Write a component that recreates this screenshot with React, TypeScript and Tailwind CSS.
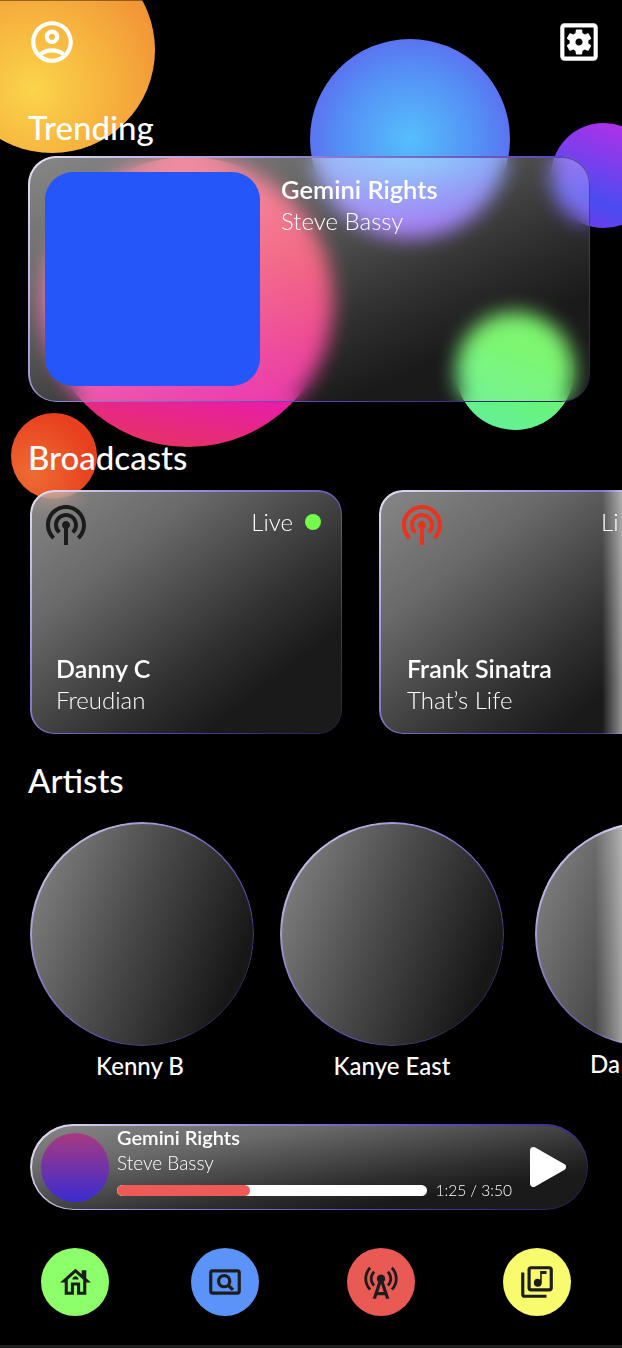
import { ReactNode } from 'react';
import {
  MdOutlineAccountCircle,
  MdOutlineSettingsApplications,
  MdPodcasts,
  MdOutlineHouse,
  MdOutlinePageview,
  MdCellTower,
  MdOutlineLibraryMusic,
} from 'react-icons/md';

const font = "font-['Lato','Noto_Sans',sans-serif]";
const glass =
  'backdrop-blur-[10px] bg-[linear-gradient(to_bottom_right,rgba(255,255,255,0.53)_0%,rgba(255,255,255,0.41)_28%,rgba(255,255,255,0.19)_62%,rgba(255,255,255,0.1)_78%,rgba(255,255,255,0.1)_100%)]';

function GlassBorder({ rounded }: { rounded: string }) {
  return (
    <div
      className={`pointer-events-none absolute inset-0 p-[1.5px] bg-[linear-gradient(135deg,#e6e0f2_0%,#8f7fd0_35%,#5a48b8_65%,#241a55_100%)] [mask:linear-gradient(#000_0_0)_content-box_exclude,linear-gradient(#000_0_0)] ${rounded}`}
    />
  );
}

function Heading({ children }: { children: ReactNode }) {
  return <h2 className="relative h-10 text-[33px] leading-[38px] font-medium text-white">{children}</h2>;
}

interface BroadcastProps {
  name: string;
  track: string;
  iconClass: string;
  textLeft: string;
  clipped?: boolean;
}

function BroadcastCard({ name, track, iconClass, textLeft, clipped }: BroadcastProps) {
  return (
    <div className={`relative h-[244px] w-[312px] shrink-0 overflow-hidden rounded-[24px] ${glass}`}>
      <GlassBorder rounded="rounded-[24px]" />
      <div className={`flex items-start justify-between pr-[21px] pt-[11px] ${iconClass}`}>
        <MdPodcasts size={48} />
        <div className="flex items-center gap-[12px] pt-[6px]">
          <div className={clipped ? 'mr-[53px] w-[16px] overflow-hidden' : ''}>
            <span className="text-[24px] leading-[30px] font-light whitespace-nowrap text-white">Live</span>
          </div>
          {!clipped && <span className="h-4 w-4 rounded-full bg-[#73fb4c]" />}
        </div>
      </div>
      <div className={`absolute bottom-[18px] ${textLeft}`}>
        <div className="text-[25px] leading-8 font-semibold text-white">{name}</div>
        <div className="text-[24px] leading-8 font-light text-white">{track}</div>
      </div>
      {clipped && <div className="absolute inset-y-0 left-[223px] w-[21px] bg-[linear-gradient(90deg,transparent,rgba(255,255,255,0.55))]" />}
    </div>
  );
}

function Artist({ name, labelClass, faded }: { name: string; labelClass: string; faded?: boolean }) {
  return (
    <div className="flex w-[224px] shrink-0 flex-col items-center">
      <div className="relative h-[224px] w-[224px] shrink-0 overflow-hidden rounded-full bg-[linear-gradient(112deg,#8a8a8a_0%,#4a4a4a_45%,#171717_85%,#1c1c1c_100%)]">
        <GlassBorder rounded="rounded-full" />
        {faded && <div className="absolute inset-y-0 left-[60px] w-[27px] bg-[linear-gradient(90deg,transparent,rgba(255,255,255,0.5))]" />}
      </div>
      <div className={`whitespace-nowrap text-[24px] leading-8 font-medium text-white ${labelClass}`}>{name}</div>
    </div>
  );
}

function NavButton({ color, children }: { color: string; children: ReactNode }) {
  return <button className={`flex h-[68px] w-[68px] items-center justify-center rounded-full text-[#1c1c1c] ${color}`}>{children}</button>;
}

export default function App() {
  return (
    <div className={`relative h-[1348px] w-[622px] overflow-hidden bg-black ${font}`}>
      {/* background blobs */}
      <div className="absolute left-[-51px] top-[-53px] h-[206px] w-[206px] rounded-full bg-[radial-gradient(circle_at_41%_69%,#fad54a_0%,#f6ae3d_45%,#ef8a33_85%)]" />
      <div className="absolute left-[310px] top-[39px] h-[200px] w-[200px] rounded-full bg-[linear-gradient(180deg,transparent_62%,#8a4cf0_100%),radial-gradient(circle_at_50%_50%,#55bffc_0%,#558ef5_50%,#5b72f0_72%)]" />
      <div className="absolute left-[551px] top-[123px] h-[105px] w-[105px] rounded-full bg-[linear-gradient(200deg,#c02ce8_0%,#4a4cf0_70%,#7a35ea_100%)]" />
      <div className="absolute left-[43px] top-[157px] h-[290px] w-[290px] rounded-full bg-[linear-gradient(190deg,#ee2a50_30%,#e81ea4_76%,#e5306c_92%)]" />
      <div className="absolute left-[456px] top-[312px] h-[118px] w-[118px] rounded-full bg-[linear-gradient(20deg,#62f0a0_0%,#6ff560_65%)]" />
      <div className="absolute left-[11px] top-[413px] h-[86px] w-[86px] rounded-full bg-[radial-gradient(circle_at_25%_70%,#ee6c32_0%,#e8401f_70%)]" />

      {/* top bar */}
      <div className="relative flex items-start justify-between pl-[27px] pr-[18px] pt-[17px]">
        <MdOutlineAccountCircle size={50} className="text-white" />
        <MdOutlineSettingsApplications size={50} className="text-white" />
      </div>

      {/* trending */}
      <section className="relative mt-[41px] pl-[28px]">
        <Heading>Trending</Heading>
        <div className={`relative mt-[8px] flex h-[246px] w-[562px] gap-[21px] rounded-[28px] pl-[17px] pt-[16px] ${glass}`}>
          <GlassBorder rounded="rounded-[28px]" />
          <div className="h-[214px] w-[215px] shrink-0 rounded-[28px] bg-[#2456f9]" />
          <div className="pt-[1px]">
            <div className="text-[25.5px] leading-8 font-semibold text-white">Gemini Rights</div>
            <div className="text-[24px] leading-8 font-light text-white">Steve Bassy</div>
          </div>
        </div>
      </section>

      {/* broadcasts */}
      <section className="relative mt-[36px]">
        <div className="pl-[28px]"><Heading>Broadcasts</Heading></div>
        <div className="mt-[12px] flex gap-[37px] pl-[30px]">
          <BroadcastCard name="Danny C" track="Freudian" iconClass="pl-[12px] text-[#1c1c1c]" textLeft="left-[26px]" />
          <BroadcastCard name="Frank Sinatra" track="That’s Life" iconClass="pl-[19px] text-[#e8331f]" textLeft="left-[28px]" clipped />
        </div>
      </section>

      {/* artists */}
      <section className="relative mt-[27px]">
        <div className="pl-[28px]"><Heading>Artists</Heading></div>
        <div className="mt-[21px] flex gap-[26px] pl-[30px]">
          <Artist name="Kenny B" labelClass="mt-[4px] mr-[4px]" />
          <Artist name="Kanye East" labelClass="mt-[4px]" />
          <div className="ml-[5px]"><Artist name="Da" labelClass="mt-[2px] self-start ml-[55px]" faded /></div>
        </div>
      </section>

      {/* player */}
      <div className={`relative ml-[30px] mt-[42px] flex h-[86px] w-[558px] items-center rounded-full pl-[11px] ${glass}`}>
        <GlassBorder rounded="rounded-full" />
        <div className="h-[69px] w-[68px] shrink-0 rounded-full bg-[linear-gradient(180deg,#a83a80_0%,#3a2bd0_100%)]" />
        <div className="ml-[8px] w-[395px] pb-[8px]">
          <div className="text-[20px] leading-[26px] font-semibold text-white">Gemini Rights</div>
          <div className="text-[19px] leading-[26px] font-light text-white">Steve Bassy</div>
          <div className="mt-[3px] flex items-center gap-[8px]">
            <div className="h-[11px] w-[311px] overflow-hidden rounded-full bg-white">
              <div className="h-full w-[133px] rounded-full bg-[#ee5a55]" />
            </div>
            <span className="text-[15.5px] font-light whitespace-nowrap text-white">1:25 / 3:50</span>
          </div>
        </div>
        <svg viewBox="0 0 36 40" className="ml-[18px] h-[40px] w-[36px]" fill="#fff" stroke="#fff" strokeWidth="7" strokeLinejoin="round">
          <path d="M3.5 3.5 L32.5 20 L3.5 36.5 Z" />
        </svg>
      </div>

      {/* nav */}
      <nav className="relative ml-[41px] mt-[38px] flex">
        <NavButton color="bg-[#8cff6b]"><MdOutlineHouse size={37} /></NavButton>
        <div className="ml-[82px]"><NavButton color="bg-[#5b93f8]"><MdOutlinePageview size={38} /></NavButton></div>
        <div className="ml-[88px]"><NavButton color="bg-[#ea5a55]"><MdCellTower size={40} /></NavButton></div>
        <div className="ml-[88px]"><NavButton color="bg-[#f9fb6e]"><MdOutlineLibraryMusic size={38} /></NavButton></div>
      </nav>

      {/* frame edges */}
      <div className="absolute inset-x-0 top-0 h-px bg-black/40" />
      <div className="absolute inset-x-0 bottom-0 h-[3px] bg-[#1e1e1e]" />
    </div>
  );
}
